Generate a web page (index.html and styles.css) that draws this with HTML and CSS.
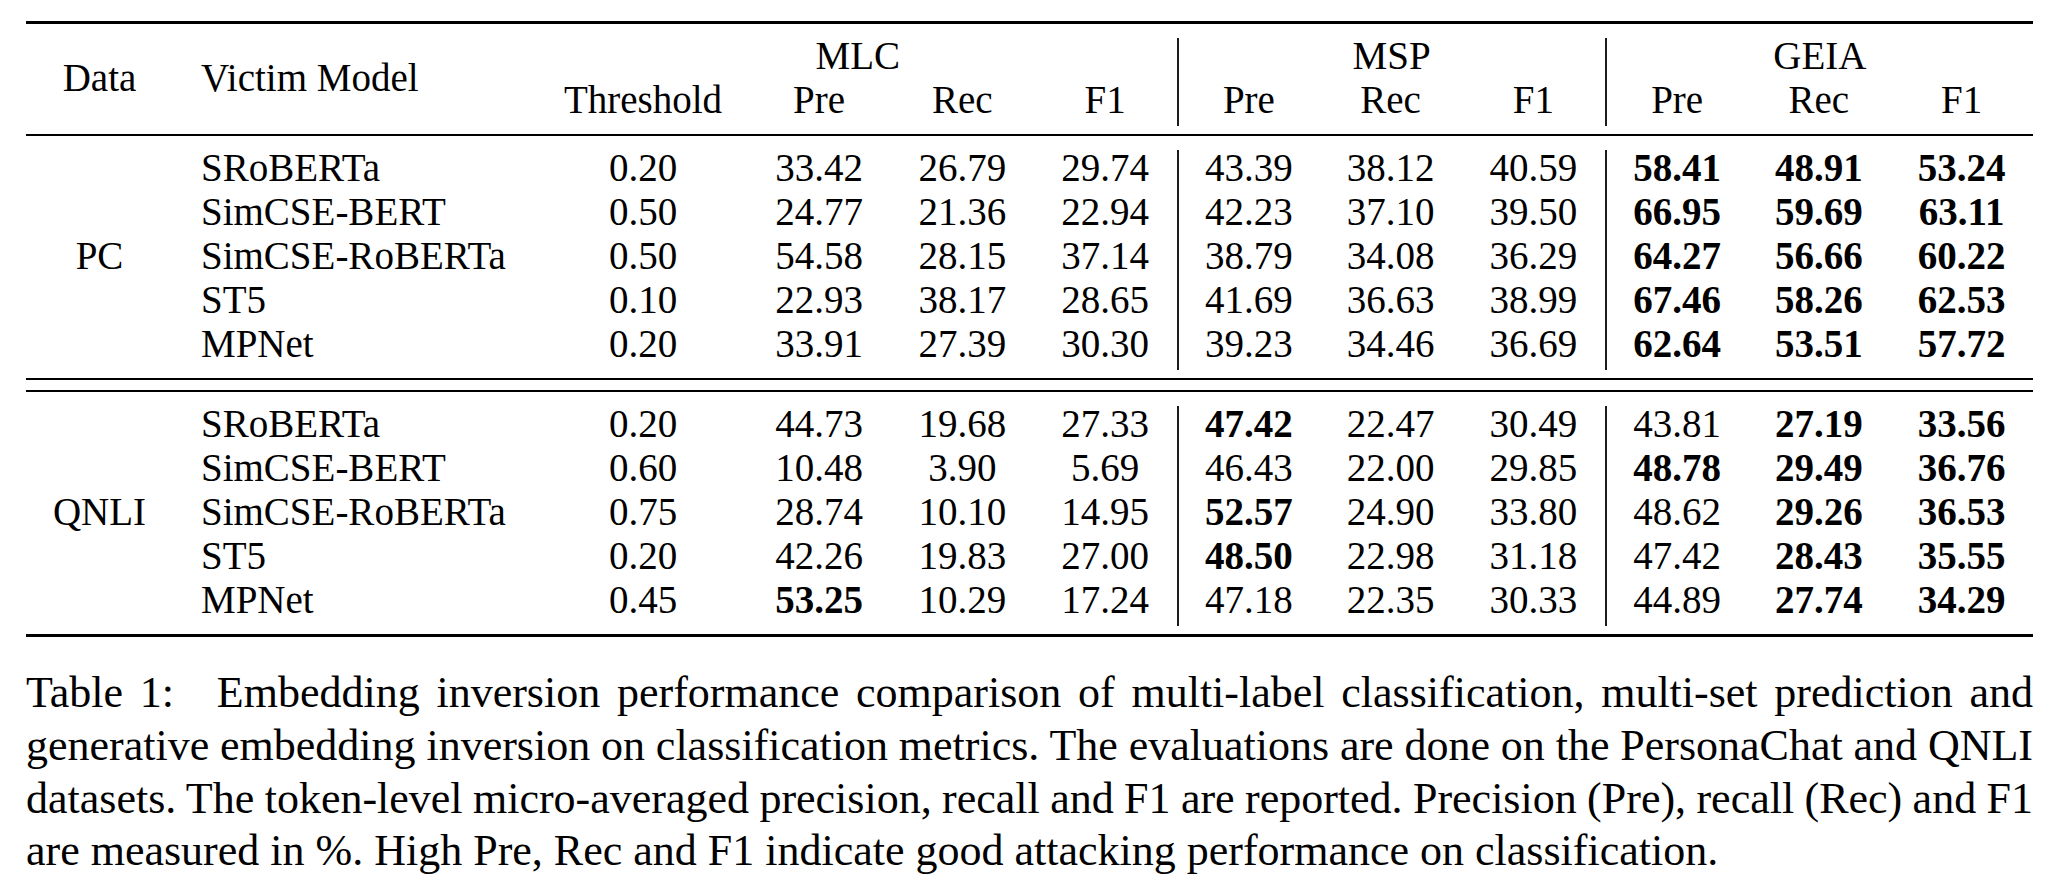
FILE: index.html
```html
<!DOCTYPE html>
<html lang="en">
<head>
<meta charset="utf-8">
<title>Table 1</title>
<link rel="stylesheet" href="styles.css">
</head>
<body>
<div class="page">
  <div class="rule heavy top"></div>

  <div class="grid hdr">
    <div class="c-data span-hdr">Data</div>
    <div class="c-model span-hdr">Victim Model</div>
    <div class="grp g-mlc">MLC</div>
    <div class="grp g-msp sep">MSP</div>
    <div class="grp g-geia sep">GEIA</div>
    <div>Threshold</div>
    <div>Pre</div><div>Rec</div><div>F1</div>
    <div class="sep">Pre</div><div>Rec</div><div>F1</div>
    <div class="sep">Pre</div><div>Rec</div><div>F1</div>
  </div>

  <div class="rule light mid"></div>

  <div class="grid body first">
    <div class="c-data span-body">PC</div>
    <div class="c-model">SRoBERTa</div><div>0.20</div><div>33.42</div><div>26.79</div><div>29.74</div><div class="sep">43.39</div><div>38.12</div><div>40.59</div><div class="sep b">58.41</div><div class="b">48.91</div><div class="b">53.24</div>
    <div class="c-model">SimCSE-BERT</div><div>0.50</div><div>24.77</div><div>21.36</div><div>22.94</div><div class="sep">42.23</div><div>37.10</div><div>39.50</div><div class="sep b">66.95</div><div class="b">59.69</div><div class="b">63.11</div>
    <div class="c-model">SimCSE-RoBERTa</div><div>0.50</div><div>54.58</div><div>28.15</div><div>37.14</div><div class="sep">38.79</div><div>34.08</div><div>36.29</div><div class="sep b">64.27</div><div class="b">56.66</div><div class="b">60.22</div>
    <div class="c-model">ST5</div><div>0.10</div><div>22.93</div><div>38.17</div><div>28.65</div><div class="sep">41.69</div><div>36.63</div><div>38.99</div><div class="sep b">67.46</div><div class="b">58.26</div><div class="b">62.53</div>
    <div class="c-model">MPNet</div><div>0.20</div><div>33.91</div><div>27.39</div><div>30.30</div><div class="sep">39.23</div><div>34.46</div><div>36.69</div><div class="sep b">62.64</div><div class="b">53.51</div><div class="b">57.72</div>
  </div>

  <div class="rule light dbl1"></div>
  <div class="rule light dbl2"></div>

  <div class="grid body second">
    <div class="c-data span-body">QNLI</div>
    <div class="c-model">SRoBERTa</div><div>0.20</div><div>44.73</div><div>19.68</div><div>27.33</div><div class="sep b">47.42</div><div>22.47</div><div>30.49</div><div class="sep">43.81</div><div class="b">27.19</div><div class="b">33.56</div>
    <div class="c-model">SimCSE-BERT</div><div>0.60</div><div>10.48</div><div>3.90</div><div>5.69</div><div class="sep">46.43</div><div>22.00</div><div>29.85</div><div class="sep b">48.78</div><div class="b">29.49</div><div class="b">36.76</div>
    <div class="c-model">SimCSE-RoBERTa</div><div>0.75</div><div>28.74</div><div>10.10</div><div>14.95</div><div class="sep b">52.57</div><div>24.90</div><div>33.80</div><div class="sep">48.62</div><div class="b">29.26</div><div class="b">36.53</div>
    <div class="c-model">ST5</div><div>0.20</div><div>42.26</div><div>19.83</div><div>27.00</div><div class="sep b">48.50</div><div>22.98</div><div>31.18</div><div class="sep">47.42</div><div class="b">28.43</div><div class="b">35.55</div>
    <div class="c-model">MPNet</div><div>0.45</div><div class="b">53.25</div><div>10.29</div><div>17.24</div><div class="sep">47.18</div><div>22.35</div><div>30.33</div><div class="sep">44.89</div><div class="b">27.74</div><div class="b">34.29</div>
  </div>

  <div class="rule heavy bottom"></div>

  <p class="caption">
    <span class="ln">Table 1:<span class="lbl-gap"></span> Embedding inversion performance comparison of multi-label classification, multi-set prediction and</span>
    <span class="ln tight">generative embedding inversion on classification metrics. The evaluations are done on the PersonaChat and QNLI</span>
    <span class="ln tight">datasets. The token-level micro-averaged precision, recall and F1 are reported. Precision (Pre), recall (Rec) and F1</span>
    <span class="ln last">are measured in %. High Pre, Rec and F1 indicate good attacking performance on classification.</span>
  </p>
</div>
</body>
</html>
```

FILE: styles.css
```css
html, body {
  margin: 0;
  padding: 0;
  background: #ffffff;
}

body {
  font-family: "Liberation Serif", "Times New Roman", Times, serif;
  color: #000;
}

.page {
  width: 2007px;
  padding: 21px 0 0 26px;
}

/* booktabs-like rules */
.rule {
  width: 100%;
  background: #000;
}
.rule.heavy { height: 3px; }
.rule.light { height: 2px; }
.rule.mid { margin-top: 8px; }
.rule.dbl1 { margin-top: 8px; }
.rule.dbl2 { margin-top: 10px; }
.rule.bottom { margin-top: 8px; }

/* table grid */
.grid {
  display: grid;
  grid-template-columns: 147px 366px 208px 144px repeat(8, 1fr);
  grid-auto-rows: 44px;
  font-size: 39px;
}
.grid > div {
  box-sizing: border-box;
  height: 44px;
  line-height: 36px;
  padding-bottom: 8px;
  text-align: center;
  white-space: nowrap;
}

.hdr { margin-top: 14px; }
.body.first { margin-top: 14px; }
.body.second { margin-top: 14px; }

.c-data {
  grid-column: 1;
  text-align: center;
}
.c-model {
  grid-column: 2;
}
.grid > .c-model {
  text-align: left;
  padding-left: 28px;
}
.span-hdr {
  grid-row: 1 / 3;
  align-self: center;
}
.span-body {
  grid-row: 1 / 6;
  align-self: center;
}

.grp { grid-row: 1; }
.g-mlc { grid-column: 3 / 7; }
.g-msp { grid-column: 7 / 10; }
.g-geia { grid-column: 10 / 13; }

.grid > .sep {
  border-left: 2px solid #1c1c1c;
}

.b { font-weight: 700; }

/* caption */
.caption {
  margin: 30px 0 0 0;
  width: 2007px;
  font-size: 44px;
  line-height: 52.8px;
}
.ln {
  display: block;
  text-align: justify;
  text-align-last: justify;
}
.ln.tight { word-spacing: -3px; }
.ln.last { text-align-last: left; }
.lbl-gap {
  display: inline-block;
  width: 26px;
}
```
